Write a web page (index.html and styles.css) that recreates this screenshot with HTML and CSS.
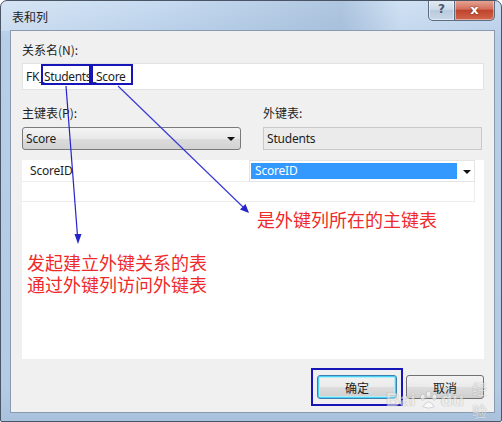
FILE: index.html
```html
<!DOCTYPE html>
<html lang="zh-CN">
<head>
	<meta charset="UTF-8">
	<title>表和列</title>
	<link rel="stylesheet" href="styles.css">
</head>
<body>
	<div class="window">
		<div class="titlebar">
			<span class="title">表和列</span>
			<div class="caption">
				<span class="cbtn help">?</span>
				<span class="cbtn close">x</span>
			</div>
		</div>
		<div class="client">
			<div class="label first">关系名(N):</div>
			<div class="textbox">FK_Students_Score</div>
			<div class="pair">
				<div class="col">
					<div class="label">主键表(P):</div>
					<div class="combo">Score<i class="drop"></i></div>
				</div>
				<div class="col">
					<div class="label">外键表:</div>
					<div class="readonly">Students</div>
				</div>
			</div>
			<div class="grid">
				<div class="cell">ScoreID</div>
				<div class="cell edit"><span class="sel">ScoreID</span><i class="drop"></i></div>
				<div class="cell"></div>
				<div class="cell"></div>
			</div>
			<div class="buttons">
				<button class="btn default">确定</button>
				<button class="btn">取消</button>
			</div>
		</div>

		<!-- 标注 -->
		<div class="note note-a">是外键列所在的主键表</div>
		<div class="note note-b">
			<div>发起建立外键关系的表</div>
			<div>通过外键列访问外键表</div>
		</div>
		<svg class="marks" width="502" height="422" viewBox="0 0 502 422">
			<rect x="42" y="65" width="48" height="19" fill="none" stroke="#1616b8" stroke-width="2"/>
			<rect x="92" y="65" width="40" height="19" fill="none" stroke="#1616b8" stroke-width="2"/>
			<rect x="312" y="369" width="90" height="36" fill="none" stroke="#1616b8" stroke-width="2"/>
			<line x1="66" y1="86" x2="77.5" y2="236" stroke="#2424c8" stroke-width="1.2"/>
			<polygon points="78,244 74.5,234 81.5,234" fill="#2424c8"/>
			<line x1="118" y1="86" x2="243" y2="207" stroke="#3a3ad4" stroke-width="1.2"/>
			<polygon points="249,213 240,209.5 245.5,204" fill="#2424c8"/>
		</svg>
		<div class="watermark">Bai<svg width="22" height="20" viewBox="0 0 22 20"><g fill="#fff" stroke="#b8b8b8" stroke-width="1"><ellipse cx="5" cy="7" rx="2.5" ry="3.2"/><ellipse cx="11" cy="4" rx="2.5" ry="3.2"/><ellipse cx="17" cy="7" rx="2.5" ry="3.2"/><path d="M5 17 Q11 7 17 17 Q11 20 5 17Z"/></g></svg>du<span class="jy">经验</span></div>
	</div>
</body>
</html>
```

FILE: styles.css
```css
body {
	margin: 0;
	font: 12px/14px "Noto Sans", "Noto Sans CJK SC", sans-serif;
	color: #1e1e1e;
}
.window {
	position: relative;
	width: 500px;
	height: 420px;
	border: 1px solid #4a5566;
	border-radius: 7px 7px 2px 2px;
	background:
		linear-gradient(90deg, rgba(255,255,255,0.25) 0, rgba(255,255,255,0) 30%, rgba(120,150,185,0.3) 68%, rgba(255,255,255,0.15) 80%, rgba(255,255,255,0) 100%) top / 100% 30px no-repeat,
		linear-gradient(#c8dcf1, #b7cee8 40px, #b4cbe5 92%, #a9c1dc);
	display: flex;
	flex-direction: column;
	overflow: hidden;
}
.titlebar {
	height: 29px;
	display: flex;
	justify-content: space-between;
	align-items: flex-start;
	padding: 0 6px 0 11px;
}
.title {
	margin-top: 9px;
	font-family: "Noto Sans CJK SC", sans-serif;
}
.caption {
	display: flex;
	margin-top: -1px;
}
.cbtn {
	height: 20px;
	border: 1px solid #5d6c80;
	border-top: none;
	text-align: center;
	font: bold 13px/19px "DejaVu Sans", sans-serif;
	box-shadow: inset 0 0 0 1px rgba(255,255,255,0.45);
}
.help {
	width: 25px;
	border-radius: 0 0 0 5px;
	background: linear-gradient(#e4ecf5, #cbd8e7 50%, #b9cadd 51%, #c9d8e8);
	color: #4a5a70;
	font-size: 12px;
}
.close {
	width: 39px;
	border-left: none;
	border-radius: 0 0 5px 0;
	background: linear-gradient(#e9a899, #d2705c 45%, #c0432c 52%, #d0664c);
	color: #fff;
	text-shadow: 0 0 2px #5a1a10;
}
.client {
	flex: 1;
	margin: 0 6px 8px 9px;
	border: 1px solid #8a9bb1;
	background: #f0f0f0;
	padding: 0 10px 0 11px;
	display: flex;
	flex-direction: column;
	font-family: "Noto Sans CJK SC", sans-serif;
}
.label {
	height: 14px;
	line-height: 14px;
}
.label.first {
	margin-top: 12px;
}
.textbox {
	margin-top: 6px;
	height: 25px;
	border: 1px solid #e2e2e2;
	background: #fff;
	padding-left: 3px;
	font: 12px/25px "Noto Sans", sans-serif;
	letter-spacing: -0.35px;
}
.pair {
	margin-top: 16px;
	display: flex;
	gap: 21px;
}
.col {
	width: 220px;
}
.combo,
.readonly {
	margin-top: 7px;
	height: 21px;
	font: 12px/21px "Noto Sans", sans-serif;
	letter-spacing: -0.2px;
	padding-left: 3px;
}
.combo {
	position: relative;
	border: 1px solid #7a7a7a;
	border-radius: 3px;
	background: linear-gradient(#f4f4f4, #e9e9e9 50%, #dcdcdc 51%, #d2d2d2);
	width: 214px;
}
.readonly {
	border: 1px solid #c9c9c9;
	background: #ebebeb;
	width: 214px;
}
.drop {
	position: absolute;
	top: 50%;
	margin-top: -2px;
	border: 4px solid transparent;
	border-top: 4px solid #111;
	border-bottom: none;
}
.combo .drop {
	right: 5px;
}
.grid {
	margin-top: 10px;
	height: 199px;
	background: #fff;
	display: grid;
	grid-template-columns: 227px 226px;
	grid-template-rows: 22px 20px;
	font: 12px/21px "Noto Sans", sans-serif;
	letter-spacing: -0.2px;
}
.cell {
	border-bottom: 1px solid #ececec;
	padding-left: 8px;
}
.cell.edit {
	position: relative;
	border: 1px solid #e4e4e4;
	padding: 2px 0 0 1px;
}
.cell:nth-child(4) {
	border-right: 1px solid #ececec;
}
.sel {
	display: block;
	width: 202px;
	height: 16px;
	line-height: 16px;
	padding-left: 4px;
	background: #3399ff;
	color: #fff;
}
.edit .drop {
	right: 3px;
	margin-top: -1px;
}
.buttons {
	margin-top: 16px;
	display: flex;
	justify-content: flex-end;
	gap: 9px;
}
.btn {
	width: 78px;
	height: 24px;
	margin: 0;
	border: 1px solid #707070;
	border-radius: 3px;
	background: linear-gradient(#f2f2f2, #ebebeb 50%, #dddddd 51%, #cfcfcf);
	font: 12px "Noto Sans CJK SC", sans-serif;
	color: #1e1e1e;
	padding: 0;
}
.btn.default {
	width: 80px;
	border-color: #3c7fb1;
	box-shadow: inset 0 0 0 1px #48d3f5, inset 0 0 0 2px #b6ebf8;
}
.marks {
	position: absolute;
	left: -1px;
	top: -1px;
	pointer-events: none;
}
.note {
	position: absolute;
	color: #f02a2a;
	font: 18px/22px "Noto Sans CJK SC", sans-serif;
}
.note div {
	height: 22px;
}
.note-a {
	left: 256px;
	top: 207px;
}
.note-b {
	left: 26px;
	top: 250px;
}
.watermark {
	position: absolute;
	left: 385px;
	top: 377px;
	display: flex;
	align-items: center;
	gap: 2px;
	font: bold 19px/22px "Liberation Sans", sans-serif;
	color: rgba(255,255,255,0.8);
	text-shadow: 0 0 1px #999, 0 0 1px #999;
	opacity: 0.6;
}
.watermark .jy {
	margin-left: 6px;
	font: 15px/22px "Noto Sans CJK SC", sans-serif;
}
```
